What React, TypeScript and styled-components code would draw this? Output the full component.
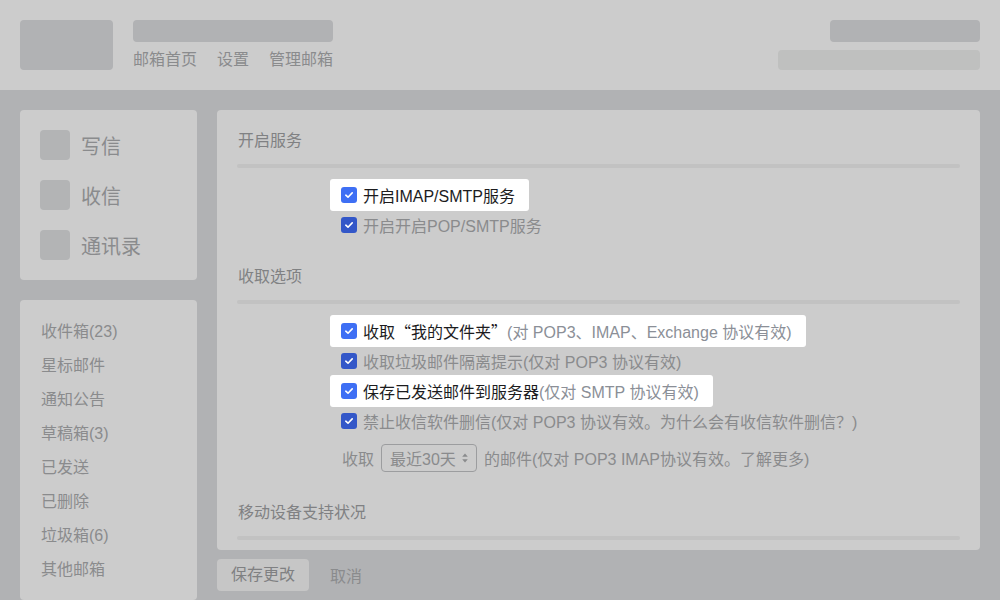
import React from "react";
import styled, { createGlobalStyle } from "styled-components";

const Global = createGlobalStyle`
  html, body { margin: 0; padding: 0; }
  body {
    background: #b1b2b4;
    font-family: "Liberation Sans", "Noto Sans CJK SC", sans-serif;
    width: 1000px;
    height: 600px;
    overflow: hidden;
  }
`;

const Page = styled.div`
  width: 1000px;
  height: 600px;
  display: flex;
  flex-direction: column;
  background: #b1b2b4;
`;

const Header = styled.header`
  height: 90px;
  flex: none;
  box-sizing: border-box;
  padding: 20px;
  background: #cccccc;
  display: flex;
  align-items: flex-start;
`;

const Logo = styled.div`
  width: 93px;
  height: 50px;
  border-radius: 4px;
  background: #b1b2b4;
`;

const HeadMid = styled.div`
  margin-left: 20px;
  display: flex;
  flex-direction: column;
  gap: 6px;
`;

const Bar = styled.div<{ w: number; h: number; light?: boolean }>`
  width: ${(p) => p.w}px;
  height: ${(p) => p.h}px;
  border-radius: 4px;
  background: ${(p) => (p.light ? "#bfc0bf" : "#b1b2b4")};
`;

const Nav = styled.nav`
  display: flex;
  gap: 20px;
  font-size: 16px;
  line-height: 24px;
  color: #8a8b8d;
`;

const HeadRight = styled.div`
  margin-left: auto;
  display: flex;
  flex-direction: column;
  align-items: flex-end;
  gap: 8px;
`;

const Body = styled.div`
  flex: 1;
  display: flex;
  gap: 20px;
  padding: 20px 20px 0;
  min-height: 0;
`;

const Side = styled.aside`
  width: 177px;
  flex: none;
  display: flex;
  flex-direction: column;
  gap: 20px;
`;

const Card = styled.div`
  background: #cccccc;
  border-radius: 4px;
`;

const ActionCard = styled(Card)`
  padding: 20px;
  display: flex;
  flex-direction: column;
  gap: 20px;
`;

const Action = styled.div`
  display: flex;
  align-items: center;
  gap: 11px;
  height: 30px;
  font-size: 20px;
  color: #8a8b8d;
`;

const ActionIcon = styled.div`
  width: 30px;
  height: 30px;
  border-radius: 4px;
  background: #b3b4b5;
`;

const FolderCard = styled(Card)`
  flex: 1;
  padding: 15px 20px 0 21px;
`;

const Folder = styled.div`
  height: 34px;
  line-height: 34px;
  font-size: 16px;
  color: #8a8b8d;
`;

const MainCol = styled.div`
  flex: 1;
  display: flex;
  flex-direction: column;
`;

const Main = styled(Card)`
  height: 440px;
  overflow: hidden;
  box-sizing: border-box;
  padding: 19px 20px 0 20px;
  display: flex;
  flex-direction: column;
  gap: 25px;
`;

const Section = styled.section`
  display: flex;
  flex-direction: column;
`;

const SectionTitle = styled.div`
  font-size: 16px;
  line-height: 24px;
  color: #808183;
  padding-left: 1px;
`;

const Divider = styled.div`
  margin-top: 11px;
  height: 4px;
  border-radius: 2px;
  background: #c2c2c2;
`;

const Options = styled.div`
  padding: 12px 0 0 93px;
  display: flex;
  flex-direction: column;
  align-items: flex-start;
`;

const Row = styled.div<{ hl?: boolean }>`
  display: flex;
  align-items: center;
  gap: 6px;
  height: ${(p) => (p.hl ? 32 : 30)}px;
  margin: ${(p) => (p.hl ? "-1px 0" : "0")};
  padding: 0 14px 0 11px;
  border-radius: 3px;
  background: ${(p) => (p.hl ? "#ffffff" : "transparent")};
  font-size: 16px;
  white-space: nowrap;
  color: ${(p) => (p.hl ? "#1c1c1e" : "#8a8b8d")};
`;

const Note = styled.span<{ hl?: boolean }>`
  color: ${(p) => (p.hl ? "#8b8f97" : "#8a8b8d")};
`;

const Quote = styled.span`
  font-family: "Noto Sans CJK SC", sans-serif;
`;

const Box = styled.span<{ hl?: boolean }>`
  width: 16px;
  height: 16px;
  flex: none;
  border-radius: 3px;
  background: ${(p) => (p.hl ? "#3e6ff4" : "#3357c8")};
  display: flex;
  align-items: center;
  justify-content: center;
`;

const SelectRow = styled.div`
  margin-top: 4px;
  height: 36px;
  display: flex;
  align-items: center;
  gap: 7px;
  padding-left: 12px;
  font-size: 16px;
  color: #8a8b8d;
  white-space: nowrap;
`;

const Select = styled.div`
  box-sizing: border-box;
  width: 96px;
  height: 28px;
  border: 1px solid #9c9d9f;
  border-radius: 4px;
  display: flex;
  align-items: center;
  justify-content: space-between;
  padding: 0 7px 0 8px;
  color: #8a8b8d;
`;

const Footer = styled.div`
  margin-top: 9px;
  display: flex;
  align-items: center;
  gap: 21px;
`;

const SaveBtn = styled.div`
  height: 32px;
  line-height: 32px;
  padding: 0 14px;
  border-radius: 4px;
  background: #c6c6c6;
  font-size: 16px;
  color: #7f8082;
`;

const Cancel = styled.div`
  font-size: 16px;
  color: #8a8b8d;
`;

const Check = () => (
  <svg width="10" height="10" viewBox="0 0 10 10">
    <polyline points="1.8,5.2 4,7.2 8.2,2.9" fill="none" stroke="#fff" strokeWidth="1.6" strokeLinecap="round" strokeLinejoin="round" />
  </svg>
);

const Arrows = () => (
  <svg width="8" height="12" viewBox="0 0 8 12">
    <path d="M4 1.5 L6.8 4.8 H1.2 Z" fill="#8a8b8d" />
    <path d="M4 10.5 L6.8 7.2 H1.2 Z" fill="#8a8b8d" />
  </svg>
);

const Option = ({ hl, children }: { hl?: boolean; children: React.ReactNode }) => (
  <Row hl={hl}>
    <Box hl={hl}>
      <Check />
    </Box>
    <span>{children}</span>
  </Row>
);

const actions = ["写信", "收信", "通讯录"];
const folders = ["收件箱(23)", "星标邮件", "通知公告", "草稿箱(3)", "已发送", "已删除", "垃圾箱(6)", "其他邮箱"];

export default function App() {
  return (
    <Page>
      <Global />
      <Header>
        <Logo />
        <HeadMid>
          <Bar w={200} h={22} />
          <Nav>
            <span>邮箱首页</span>
            <span>设置</span>
            <span>管理邮箱</span>
          </Nav>
        </HeadMid>
        <HeadRight>
          <Bar w={150} h={22} />
          <Bar w={202} h={20} light />
        </HeadRight>
      </Header>
      <Body>
        <Side>
          <ActionCard>
            {actions.map((a) => (
              <Action key={a}>
                <ActionIcon />
                {a}
              </Action>
            ))}
          </ActionCard>
          <FolderCard>
            {folders.map((f) => (
              <Folder key={f}>{f}</Folder>
            ))}
          </FolderCard>
        </Side>
        <MainCol>
          <Main>
            <Section>
              <SectionTitle>开启服务</SectionTitle>
              <Divider />
              <Options>
                <Option hl>开启IMAP/SMTP服务</Option>
                <Option>开启开启POP/SMTP服务</Option>
              </Options>
            </Section>
            <Section>
              <SectionTitle>收取选项</SectionTitle>
              <Divider />
              <Options>
                <Option hl>
                  收取<Quote>“</Quote>我的文件夹<Quote>”</Quote>
                  <Note hl>(对 POP3、IMAP、Exchange 协议有效)</Note>
                </Option>
                <Option>收取垃圾邮件隔离提示(仅对 POP3 协议有效)</Option>
                <Option hl>
                  保存已发送邮件到服务器<Note hl>(仅对 SMTP 协议有效)</Note>
                </Option>
                <Option>禁止收信软件删信(仅对 POP3 协议有效。为什么会有收信软件删信？)</Option>
                <SelectRow>
                  <span>收取</span>
                  <Select>
                    <span>最近30天</span>
                    <Arrows />
                  </Select>
                  <span>的邮件(仅对 POP3 IMAP协议有效。了解更多)</span>
                </SelectRow>
              </Options>
            </Section>
            <Section>
              <SectionTitle>移动设备支持状况</SectionTitle>
              <Divider />
            </Section>
          </Main>
          <Footer>
            <SaveBtn>保存更改</SaveBtn>
            <Cancel>取消</Cancel>
          </Footer>
        </MainCol>
      </Body>
    </Page>
  );
}
